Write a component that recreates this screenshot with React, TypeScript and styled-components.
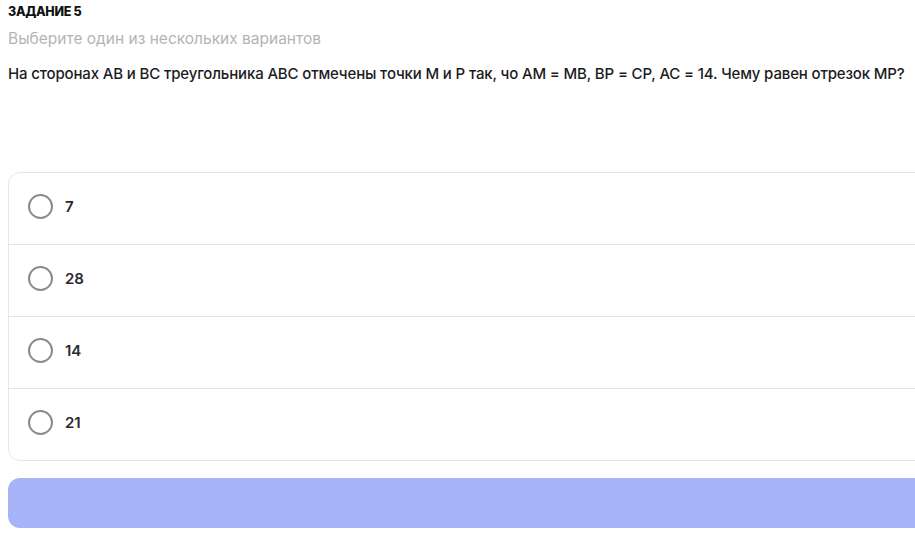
import styled, { createGlobalStyle } from "styled-components";

const GlobalStyle = createGlobalStyle`
  html, body {
    margin: 0;
    padding: 0;
    background: #ffffff;
    font-family: Inter, "Noto Sans", sans-serif;
    overflow: hidden;
  }
`;

const answers = ["7", "28", "14", "21"];

const App = () => {
  return (
    <Page>
      <GlobalStyle />
      <Label>ЗАДАНИЕ 5</Label>
      <Hint>Выберите один из нескольких вариантов</Hint>
      <Question>
        На сторонах AB и BC треугольника ABC отмечены точки M и P так, чо AM = MB, BP = CP, AC = 14. Чему равен
        отрезок MP?
      </Question>
      <Options>
        {answers.map((a) => (
          <Option key={a}>
            <Radio />
            <OptionText>{a}</OptionText>
          </Option>
        ))}
      </Options>
      <Submit type="button" />
    </Page>
  );
};

export default App;

const Page = styled.div`
  width: 940px;
  padding: 4px 0 0 8px;
  box-sizing: border-box;
`;

const Label = styled.div`
  font-size: 12.5px;
  font-weight: 800;
  color: #111;
  letter-spacing: -0.3px;
  line-height: 16px;
`;

const Hint = styled.div`
  margin-top: 9px;
  font-size: 15.5px;
  color: #b4b4b8;
  line-height: 20px;
`;

const Question = styled.div`
  margin-top: 15px;
  font-size: 15px;
  font-weight: 450;
  color: #1c1c1e;
  line-height: 20px;
  white-space: nowrap;
  letter-spacing: -0.15px;
`;

const Options = styled.div`
  margin-top: 88px;
  border: 1px solid #e6e6e8;
  border-radius: 12px;
  display: flex;
  flex-direction: column;
`;

const Option = styled.div`
  height: 66px;
  padding: 0 0 5px 19px;
  display: flex;
  align-items: center;
  gap: 12px;
  border-bottom: 1px solid #e6e6e8;

  &:last-child {
    border-bottom: none;
  }
`;

const Radio = styled.span`
  width: 21px;
  height: 21px;
  border-radius: 50%;
  border: 2px solid #8a8a90;
`;

const OptionText = styled.span`
  font-size: 15px;
  font-weight: 600;
  color: #2a2a2e;
`;

const Submit = styled.button`
  display: block;
  margin-top: 17px;
  width: 100%;
  height: 50px;
  border: none;
  border-radius: 12px;
  background: #a6b4f7;
`;
